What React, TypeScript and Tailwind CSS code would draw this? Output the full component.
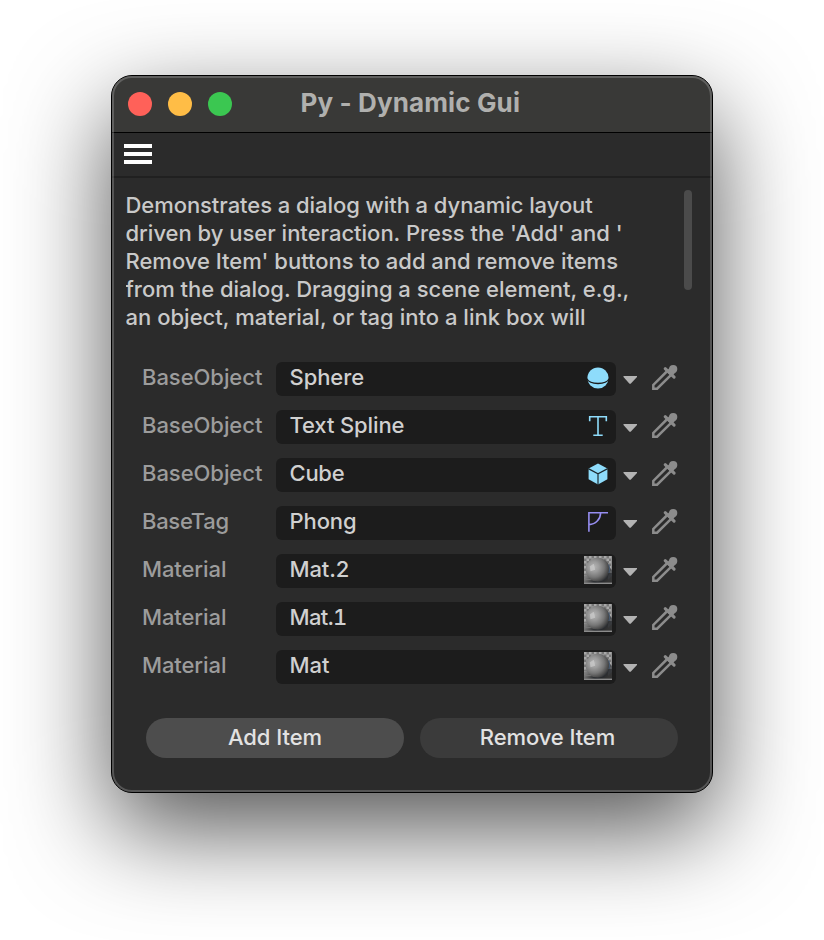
import type { ReactNode } from "react";

type Item = { label: string; labelClass: string; value: string; valueClass: string; icon: ReactNode };

const intro = [
  { text: "Demonstrates a dialog with a dynamic layout", tracking: "tracking-[-0.06px]" },
  { text: "driven by user interaction. Press the 'Add' and '", tracking: "tracking-[-0.01px]" },
  { text: "Remove Item' buttons to add and remove items", tracking: "tracking-[-0.01px]" },
  { text: "from the dialog. Dragging a scene element, e.g.,", tracking: "tracking-[-0.02px]" },
  { text: "an object, material, or tag into a link box will", tracking: "tracking-[0.02px]" },
];

function SphereIcon() {
  return (
    <svg className="size-7" viewBox="0 0 28 28" fill="none">
      <circle cx="14" cy="14" r="10.6" fill="#8edcfb" />
      <path d="M2.8 14.7C6 21 22 21 25.2 14.7" stroke="#1c1c1c" strokeWidth="1.4" />
    </svg>
  );
}

function TextIcon() {
  return (
    <svg className="size-7" viewBox="0 0 28 28" fill="none" stroke="#8edcfb" strokeWidth="1.6">
      <path d="M5.7 9.2V4.8H22.3V9.2M14 4.8V23.3M9.3 23.3H18.7" />
    </svg>
  );
}

function CubeIcon() {
  return (
    <svg className="size-7" viewBox="0 0 28 28" fill="none">
      <path d="M14 3.4L23.4 8.5V19.3L14 24.6L4.6 19.3V8.5Z" fill="#8edcfb" />
      <path d="M4.3 8.6L14 13.7L23.7 8.6M14 13.7V25" stroke="#1c2a30" strokeWidth="1.2" />
    </svg>
  );
}

function PhongIcon() {
  return (
    <svg className="size-7" viewBox="0 0 28 28" fill="none" stroke="#968df0" strokeWidth="1.6">
      <path d="M24 4.8H4.9V23.7M16.6 5C16.6 11 11.5 16.6 5 16.6" />
    </svg>
  );
}

function MaterialIcon() {
  return (
    <svg className="size-7" viewBox="0 0 28 28">
      <defs>
        <pattern id="checks" width="5" height="5" patternUnits="userSpaceOnUse">
          <rect width="5" height="5" fill="#777777" />
          <path d="M0 0H2.5V5H5V2.5H0Z" fill="#a8a8a8" />
        </pattern>
        <linearGradient id="floor" x1="0" y1="0" x2="1" y2="0.3">
          <stop offset="0" stopColor="#a0a0a0" />
          <stop offset="0.35" stopColor="#555555" />
          <stop offset="0.6" stopColor="#1c1f24" />
          <stop offset="1" stopColor="#343434" />
        </linearGradient>
        <radialGradient id="ball" cx="0.34" cy="0.38" r="0.7">
          <stop offset="0" stopColor="#b4b4b4" />
          <stop offset="0.3" stopColor="#9c9c9c" />
          <stop offset="0.62" stopColor="#767676" />
          <stop offset="0.86" stopColor="#4a4a4a" />
          <stop offset="1" stopColor="#282b30" />
        </radialGradient>
      </defs>
      <rect width="28" height="28" fill="url(#checks)" />
      <rect y="17" width="28" height="11" fill="url(#floor)" />
      <path d="M0 18.5H6M0 21H7M0 23.5H10" stroke="#777" strokeWidth="0.8" />
      <path d="M24 10L28 14V20L24 24Z" fill="#3a3d42" opacity="0.7" />
      <path d="M0 27.3H28" stroke="#8c8c8c" strokeWidth="1.4" />
      <circle cx="13.8" cy="13.8" r="12" fill="url(#ball)" />
      <path d="M5.8 10.2L9.8 7.8L11.2 13.8L6.5 15.2Z" fill="#cfcfcf" opacity="0.65" />
      <path d="M24.7 8.5C25.7 11.5 25.7 14.5 24.9 17" stroke="#465b75" strokeWidth="1" fill="none" />
    </svg>
  );
}

function Eyedropper() {
  return (
    <svg className="h-[26px] w-[26px]" viewBox="0 0 26 26" fill="none">
      <path d="M14.8 6.5L1.3 19.9V23.7H5.1L18.6 10.4" stroke="#8c8c8c" strokeWidth="2.5" />
      <path d="M13.2 3.7L22.1 12.2" stroke="#8c8c8c" strokeWidth="3.1" strokeLinecap="round" />
      <path d="M17 9L21.3 4.2" stroke="#8c8c8c" strokeWidth="7.4" />
      <circle cx="21.2" cy="4.1" r="4.1" fill="#8c8c8c" />
    </svg>
  );
}

const base = { label: "BaseObject", labelClass: "tracking-[-0.05px]" };
const material = { label: "Material", labelClass: "tracking-[-0.1px]" };

const items: Item[] = [
  { ...base, value: "Sphere", valueClass: "tracking-[-0.08px]", icon: <SphereIcon /> },
  { ...base, value: "Text Spline", valueClass: "tracking-[-0.12px]", icon: <TextIcon /> },
  { ...base, value: "Cube", valueClass: "tracking-[-0.25px]", icon: <CubeIcon /> },
  { label: "BaseTag", labelClass: "tracking-[-0.3px]", value: "Phong", valueClass: "tracking-[-0.1px]", icon: <PhongIcon /> },
  { ...material, value: "Mat.2", valueClass: "tracking-[-0.1px]", icon: <MaterialIcon /> },
  { ...material, value: "Mat.1", valueClass: "tabular-nums tracking-[-0.6px]", icon: <MaterialIcon /> },
  { ...material, value: "Mat", valueClass: "", icon: <MaterialIcon /> },
];

function LinkRow({ item }: { item: Item }) {
  return (
    <div className="flex h-[34px]">
      <span className={`w-[134px] leading-[30px] text-[#9c9c9c] ${item.labelClass}`}>{item.label}</span>
      <div className="flex w-[340px] justify-between rounded-md bg-[#1c1c1c] pr-1 pl-[13.5px]">
        <span className={`leading-[30px] text-[#d0d0d0] ${item.valueClass}`}>{item.value}</span>
        <span className="pt-0.5">{item.icon}</span>
      </div>
      <svg className="mt-3.5 ml-[7px] h-[9px] w-[14px]" viewBox="0 0 14 9">
        <path d="M0.5 0H14V1L7.7 7.7H6.5L0.5 1Z" fill="#b3b3b3" />
      </svg>
      <span className="mt-[3px] ml-[15px]">
        <Eyedropper />
      </span>
    </div>
  );
}

export default function App() {
  return (
    <div className="flex h-[940px] w-[824px] overflow-hidden bg-white pt-[75px] pl-[111px] font-[Inter,sans-serif] text-[22px] font-[450]">
      <main className="relative flex h-[718px] w-[602px] flex-col overflow-visible rounded-[21px] border border-black bg-[#2b2b2b] shadow-[0_36px_98px_rgba(0,0,0,0.68)]">
        <header className="flex h-[57px] shrink-0 items-center rounded-t-[20px] border-b border-black bg-[#393937] pl-4">
          <div className="flex gap-4">
            <span className="size-6 rounded-full bg-[#ff6159]" />
            <span className="size-6 rounded-full bg-[#ffbd46]" />
            <span className="size-6 rounded-full bg-[#3bc751]" />
          </div>
          <h1 className="ml-[68.5px] pb-[3px] text-[26px] font-bold tracking-[0.12px] whitespace-nowrap text-[#b0b0ae]">Py - Dynamic Gui</h1>
        </header>
        <nav className="flex h-[45px] shrink-0 flex-col gap-1 border-b-2 border-[#202020] pt-[11px] pl-3">
          <span className="h-1 w-7 bg-white" />
          <span className="h-1 w-7 bg-white" />
          <span className="h-1 w-7 bg-white" />
        </nav>
        <section className="flex h-[171px] shrink-0 justify-between pt-3 pr-5 pl-[13.5px]">
          <div className="mt-px h-[138px] overflow-hidden leading-7 whitespace-nowrap text-[#c9c9c9]">
            {intro.map((line) => (
              <p key={line.text} className={line.tracking}>{line.text}</p>
            ))}
          </div>
          <div className="h-[100px] w-2 rounded-full bg-[#4b4b4b]" />
        </section>
        <section className="flex flex-col gap-3.5 pt-[13px] pl-[30px]">
          {items.map((item) => (
            <LinkRow key={item.value} item={item} />
          ))}
        </section>
        <footer className="mt-[34px] flex gap-4 pl-[34px]">
          <button className="h-10 w-[258px] rounded-full bg-[#4d4d4d] pb-0.5 tracking-[-0.05px] text-[#e2e2e2]">Add Item</button>
          <button className="h-10 w-[258px] rounded-full bg-[#3b3b3b] pr-[3px] pb-0.5 tracking-[-0.1px] text-[#e2e2e2]">Remove Item</button>
        </footer>
        <div className="pointer-events-none absolute inset-0 rounded-[20px] border-2 border-white/20" />
      </main>
    </div>
  );
}
